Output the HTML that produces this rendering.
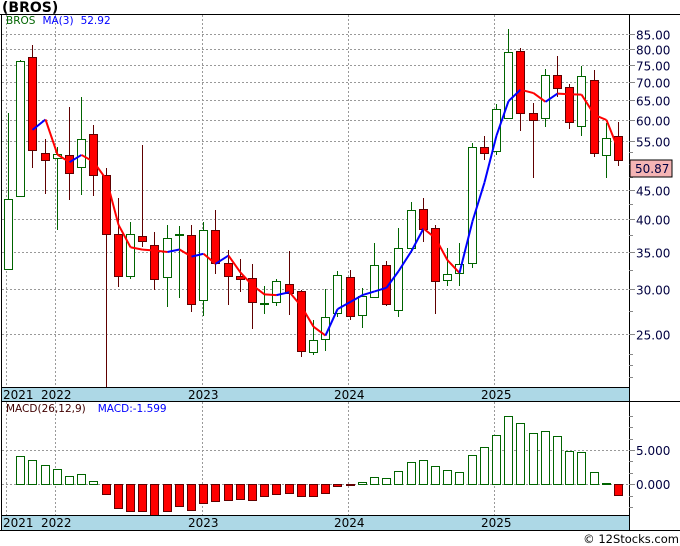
<!DOCTYPE html>
<html><head><meta charset="utf-8">
<style>
html,body{margin:0;padding:0;background:#fff;width:680px;height:546px;overflow:hidden}
svg{display:block;font-family:"DejaVu Sans","Liberation Sans",sans-serif}
</style></head>
<body>
<svg id="s" width="680" height="546" viewBox="0 0 680 546" xmlns="http://www.w3.org/2000/svg">
<rect width="680" height="546" fill="#fff"/>
<text x="2" y="12" font-size="14" font-weight="bold" fill="#000">(BROS)</text>
<g id="grid"></g>
<g id="candles"></g>
<g id="ma"></g>
<g id="macd"></g>
<line x1="0" y1="14.5" x2="680" y2="14.5" stroke="#000"/>
<line x1="1.5" y1="14" x2="1.5" y2="531" stroke="#000"/>
<line x1="629.5" y1="14" x2="629.5" y2="531" stroke="#000"/>
<rect x="2" y="387" width="627" height="15" fill="#add8e6"/>
<line x1="1" y1="387.5" x2="629" y2="387.5" stroke="#000"/>
<line x1="1" y1="401.5" x2="680" y2="401.5" stroke="#000"/>
<rect x="2" y="515" width="627" height="15" fill="#add8e6"/>
<line x1="1" y1="515.5" x2="629" y2="515.5" stroke="#000"/>
<line x1="0" y1="530.5" x2="680" y2="530.5" stroke="#000"/>
<g font-size="12" fill="#000">
<text x="3" y="399">2021</text><text x="41" y="399">2022</text><text x="188" y="399">2023</text><text x="334" y="399">2024</text><text x="481" y="399">2025</text>
<text x="3" y="527">2021</text><text x="41" y="527">2022</text><text x="188" y="527">2023</text><text x="334" y="527">2024</text><text x="481" y="527">2025</text>
</g>
<text x="6" y="24" font-size="10.5"><tspan fill="#006400">BROS</tspan><tspan fill="#0000ff" dx="7">MA(3)</tspan><tspan fill="#0000ff" dx="7">52.92</tspan></text>
<text x="6" y="412" font-size="10.5"><tspan fill="#400000">MACD(26,12,9)</tspan><tspan fill="#0000ff" dx="12">MACD:-1.599</tspan></text>
<g id="axis" font-size="12" fill="#000040"></g>
<rect x="630" y="160" width="42" height="17" fill="#f4b4b4" stroke="#000"/>
<text x="635" y="173" font-size="12" fill="#000040">50.87</text>
<text x="679" y="543" font-size="11.5" fill="#000" text-anchor="end">© 12Stocks.com</text>
</svg>
<script>
var NS="http://www.w3.org/2000/svg";
function el(p,t,a){var e=document.createElementNS(NS,t);for(var k in a)e.setAttribute(k,a[k]);p.appendChild(e);return e;}
function Y(p){return 334-245*Math.log(p/25);}
function P(y){return 25*Math.exp((334-y)/245);}
var grid=document.getElementById('grid'),axis=document.getElementById('axis');
var lv=[85,80,75,70,65,60,55,45,40,35,30,25];
lv.forEach(function(p){var y=Math.round(Y(p))+0.5;
 el(grid,'line',{x1:2,y1:y,x2:629,y2:y,stroke:'#999','stroke-dasharray':'2,2'});
 el(axis,'line',{x1:629,y1:y,x2:635,y2:y,stroke:'#888'});
 var t=el(axis,'text',{x:636,y:y+5});t.textContent=p.toFixed(2);});
[52.5,50,47.5,42.5,37.5,32.5,27.5,23,22,21,20].forEach(function(p){var y=Math.round(Y(p))+0.5;
 if(y<385)el(axis,'line',{x1:629,y1:y,x2:633,y2:y,stroke:'#888'});});
[6,55,202,348,494].forEach(function(x){
 el(grid,'line',{x1:x+.5,y1:15,x2:x+.5,y2:387,stroke:'#999','stroke-dasharray':'2,2'});
 el(grid,'line',{x1:x+.5,y1:402,x2:x+.5,y2:515,stroke:'#999','stroke-dasharray':'2,2'});});
[450,484].forEach(function(y){el(grid,'line',{x1:2,y1:y+.5,x2:629,y2:y+.5,stroke:'#999','stroke-dasharray':'2,2'});});
[[450,'5.000'],[484,'0.000']].forEach(function(a){el(axis,'line',{x1:629,y1:a[0]+.5,x2:635,y2:a[0]+.5,stroke:'#888'});
 var t=el(axis,'text',{x:636,y:a[0]+5});t.textContent=a[1];});
[416,427,439,461,473,496,507].forEach(function(y){el(axis,'line',{x1:629,y1:y+.5,x2:633,y2:y+.5,stroke:'#888'});});
var C=[
['g',199,269,113,270],['g',61,196,60,197],['r',57,150,45,168],['r',153,160,139,194],['g',154,158,147,230],
['r',155,173,107,200],['g',139,167,97,195],['r',134,175,125,196],['r',175,234,168,387],['r',234,276,198,287],
['g',234,276,222,279],['r',236,241,145,247],['r',245,279,232,290],['g',238,277,225,307],['g',234,235,226,298],
['r',235,304,225,312],['g',230,300,222,316],['r',230,263,210,274],['r',263,276,250,305],['r',276,279,259,292],
['r',278,302,264,329],['g',303,304,286,314],['g',281,302,279,306],['r',284,293,251,315],['r',291,351,290,357],
['g',340,352,320,355],['g',317,339,289,351],['g',275,313,271,317],['r',277,316,270,320],['g',296,315,288,328],
['g',265,297,243,298],['r',265,304,261,306],['g',248,310,228,317],['g',210,248,202,253],['r',209,229,198,242],
['r',228,281,225,314],['g',274,280,248,286],['g',264,273,243,286],['g',147,263,143,268],['r',147,153,136,160],
['g',109,151,104,155],['g',52,118,29,118],['r',51,113,48,131],['r',113,120,103,178],['g',75,118,69,127],
['r',75,88,56,97],['r',87,122,84,129],['g',76,126,66,136],['r',80,153,70,157],['g',138,155,123,178],['r',136,160,122,166]];
var cg=document.getElementById('candles');
function X(i){return Math.round(8+12.2*i);}
C.forEach(function(c,i){var x=X(i);var col=c[0]=='g'?'#006400':'#600000';
 el(cg,'line',{x1:x+.5,y1:c[3],x2:x+.5,y2:c[4],stroke:col,'stroke-width':1});
 var h=Math.max(1,c[2]-c[1]);
 if(c[0]=='g')el(cg,'rect',{x:x-3.5,y:c[1]+.5,width:8,height:h,fill:'#fff',stroke:'#006400'});
 else el(cg,'rect',{x:x-3.5,y:c[1]+.5,width:8,height:h,fill:'#ff0000',stroke:'#600000'});});
var closes=C.map(function(c){return P(c[0]=='g'?c[1]:c[2]);});
var mg=document.getElementById('ma');var prev=null;
for(var i=2;i<C.length;i++){var m=(closes[i]+closes[i-1]+closes[i-2])/3;var y=Y(m);
 if(prev){el(mg,'line',{x1:prev[0],y1:prev[1],x2:X(i)+.5,y2:y,stroke:y<prev[1]?'#0000ff':'#ff0000','stroke-width':2});}
 prev=[X(i)+.5,y];}
var M=[null,456,460,465,469,476,474,481,494,508,511,511,515,511,506,510,503,501,500,499,500,496,494,493,496,496,493,486,485,482,477,478,471,462,460,466,470,472,455,447,435,416,423,433,431,436,451,452,472,483,495];
var mgg=document.getElementById('macd');
M.forEach(function(v,i){if(v==null)return;var x=X(i);
 if(v<484)el(mgg,'rect',{x:x-3.5,y:v+.5,width:8,height:484-v,fill:'#fff',stroke:'#006400'});
 else el(mgg,'rect',{x:x-3.5,y:484.5,width:8,height:Math.max(1,v-484),fill:'#ff0000',stroke:'#600000'});});
</script>
</body></html>
